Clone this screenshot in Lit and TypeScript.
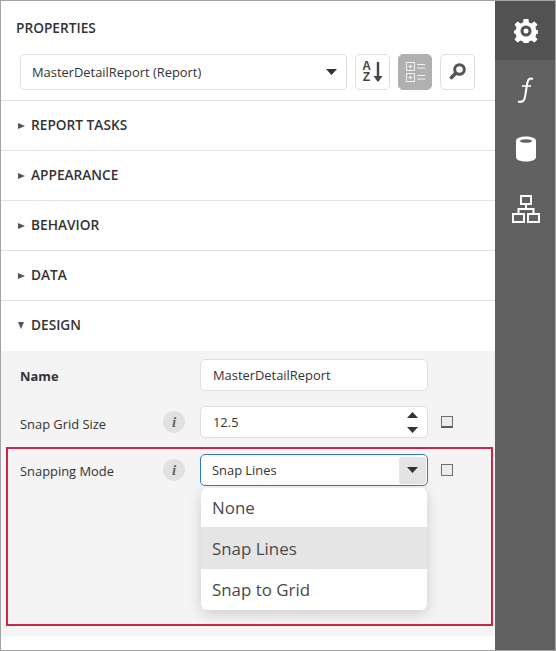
import { LitElement, html, css, svg } from "lit"
import { customElement } from "lit/decorators.js"

const SECTIONS = ["REPORT TASKS", "APPEARANCE", "BEHAVIOR", "DATA"]

const caret = svg`<svg width="11" height="6" viewBox="0 0 11 6"><path d="M0 0H11L5.5 6Z" fill="#333"/></svg>`

@customElement("app-root")
export class AppRoot extends LitElement {
  static styles = css`
    :host {
      display: block;
      width: 556px;
      height: 651px;
      box-sizing: border-box;
      border: 1px solid #a3a3a3;
      font-family: "Open Sans", "Noto Sans", sans-serif;
      color: #333;
      background: #fff;
      overflow: hidden;
    }
    * {
      box-sizing: border-box;
    }
    .frame {
      display: flex;
      height: 649px;
    }
    .panel {
      flex: 0 0 494px;
      display: flex;
      flex-direction: column;
    }
    .title {
      font-size: 13.7px;
      font-weight: 600;
      line-height: 16px;
      padding: 19px 0 0 15px;
      height: 43px;
    }
    .toolbar {
      display: flex;
      align-items: center;
      padding-left: 19px;
      height: 56px;
    }
    .box {
      border: 1px solid #dedede;
      border-radius: 5px;
      background: #fff;
    }
    .report {
      width: 327px;
      height: 36px;
      display: flex;
      align-items: center;
      justify-content: space-between;
      padding: 0 9px 0 11px;
      font-size: 12.9px;
    }
    .tool {
      width: 35px;
      height: 36px;
      margin-left: 8px;
      display: flex;
      align-items: center;
      justify-content: center;
    }
    .tool.on {
      width: 34px;
      background: #b0b0b0;
      border-color: #b0b0b0;
    }
    .az {
      width: 9px;
      margin-right: 2px;
      text-align: center;
      font: 700 12px/11px "Liberation Sans", sans-serif;
      color: #444;
    }
    .section {
      height: 50px;
      border-top: 1px solid #e3e3e3;
      display: flex;
      align-items: center;
      gap: 6px;
      padding: 0 0 2px 17px;
      font-size: 13.7px;
      font-weight: 600;
    }
    .section.last {
      height: 51px;
      gap: 7px;
      padding-bottom: 3px;
    }
    .arrow {
      width: 0;
      height: 0;
      margin-top: 2px;
      border-style: solid;
      border-width: 3.5px 0 3.5px 7px;
      border-color: transparent transparent transparent #555;
    }
    .arrow.open {
      border-width: 7px 3.5px 0 3.5px;
      border-color: #555 transparent transparent transparent;
    }
    .content {
      position: relative;
      height: 285px;
      background: #f4f4f4;
      padding-top: 8px;
    }
    .row {
      display: grid;
      grid-template-columns: 143px 37px 228px 19px;
      align-items: center;
      padding-left: 19px;
      font-size: 12.9px;
      margin-bottom: 15px;
    }
    .row.grid {
      margin-bottom: 16px;
    }
    .label {
      padding-top: 2px;
    }
    .row.grid .label {
      padding-top: 4px;
    }
    .label.bold {
      font-weight: 700;
    }
    .info {
      width: 22px;
      height: 22px;
      border-radius: 50%;
      background: #e1e1e1;
      color: #666;
      font: italic 700 15px/22px "Liberation Serif", serif;
      text-align: center;
    }
    .input {
      height: 32px;
      display: flex;
      align-items: center;
      justify-content: space-between;
      padding-left: 12px;
      font-size: 12.9px;
    }
    .spin {
      display: flex;
      flex-direction: column;
      gap: 9px;
      padding-right: 9px;
    }
    .select {
      border-color: #337ab7;
      padding-left: 11px;
      padding-right: 1px;
    }
    .drop {
      width: 27px;
      height: 27px;
      background: #e4e4e4;
      border-radius: 3px;
      display: flex;
      align-items: center;
      justify-content: center;
    }
    .check {
      width: 12px;
      height: 12px;
      margin-left: 13px;
      border: 1px solid #6f6f6f;
      background: #ececec;
    }
    .row.grid .check {
      border-bottom: 2px solid #5c5c5c;
    }
    .menu {
      position: absolute;
      left: 200px;
      top: 137px;
      width: 226px;
      height: 122px;
      background: #fff;
      border-radius: 6px;
      overflow: hidden;
      box-shadow: 0 4px 14px rgba(0, 0, 0, 0.16);
      font-size: 16.9px;
      color: #4a4a4a;
    }
    .item {
      height: 39px;
      line-height: 39px;
      padding-left: 11px;
    }
    .item.sel {
      height: 42px;
      line-height: 44px;
      background: #e5e5e5;
    }
    .item.end {
      height: 41px;
      line-height: 41px;
    }
    .mark {
      position: absolute;
      left: 5px;
      top: 96px;
      width: 487px;
      height: 179px;
      border: 2px solid #c8264a;
      pointer-events: none;
    }
    .rail {
      flex: 0 0 60px;
      background: #616161;
      display: flex;
      flex-direction: column;
    }
    .tab {
      height: 59px;
      padding-left: 2px;
      display: flex;
      align-items: center;
      justify-content: center;
    }
    .tab.active {
      background: #525252;
    }
    .tab.tree {
      padding-top: 3px;
    }
  `

  render() {
    return html`
      <div class="frame">
        <div class="panel">
          <div class="title">PROPERTIES</div>
          <div class="toolbar">
            <div class="box report">
              <span>MasterDetailReport (Report)</span>
              ${caret}
            </div>
            <div class="box tool">
              <div class="az">A Z</div>
              <svg width="10" height="22" viewBox="0 0 10 22">
                <path d="M5 1V20" stroke="#444" stroke-width="2.4"/>
                <path d="M0.500 15H9.500L5 21Z" fill="#444"/>
              </svg>
            </div>
            <div class="box tool on">
              <svg width="19" height="20" viewBox="0 0 19 20" fill="none" stroke="#f2f2f2">
                <rect x=".5" y=".5" width="8" height="8"/>
                <rect x=".5" y="11.500" width="8" height="8"/>
                <path d="M2.500 4.500H6.500M4.500 2.500V6.500M2.500 15.500H6.500M4.500 13.500V17.500M11 2.500H19M11 6H19M11 13.500H19M11 17H19"/>
              </svg>
            </div>
            <div class="box tool">
              <svg width="20" height="20" viewBox="0 0 20 20">
                <circle cx="11.500" cy="7.500" r="4.800" fill="none" stroke="#555" stroke-width="3"/>
                <path d="M7.500 11.500L3.500 15.500" stroke="#555" stroke-width="3.600" stroke-linecap="round"/>
              </svg>
            </div>
          </div>
          ${SECTIONS.map(
            (s) => html`<div class="section"><span class="arrow"></span>${s}</div>`,
          )}
          <div class="section last"><span class="arrow open"></span>DESIGN</div>
          <div class="content">
            <div class="row">
              <span class="label bold">Name</span>
              <span></span>
              <div class="box input">MasterDetailReport</div>
            </div>
            <div class="row grid">
              <span class="label">Snap Grid Size</span>
              <span class="info">i</span>
              <div class="box input">
                12.5
                <div class="spin">
                  <svg width="11" height="6" viewBox="0 0 11 6"><path d="M0 6H11L5.500 0Z" fill="#333"/></svg>
                  <svg width="11" height="6" viewBox="0 0 11 6"><path d="M0 0H11L5.500 6Z" fill="#333"/></svg>
                </div>
              </div>
              <span class="check"></span>
            </div>
            <div class="row">
              <span class="label">Snapping Mode</span>
              <span class="info">i</span>
              <div class="box input select">
                Snap Lines
                <div class="drop">${caret}</div>
              </div>
              <span class="check"></span>
            </div>
            <div class="menu">
              <div class="item">None</div>
              <div class="item sel">Snap Lines</div>
              <div class="item end">Snap to Grid</div>
            </div>
            <div class="mark"></div>
          </div>
        </div>
        <div class="rail">
          <div class="tab active">
            <svg width="26" height="26" viewBox="0 0 26 26">
              <path fill="#fff" fill-rule="evenodd" d="M10.600 1H15.400L16 4.600L18.400 5.600L21.400 3.500L24.500 6.600L22.400 9.600L23.400 12L25 12.600V15.400L23.400 16L22.400 18.400L24.500 21.400L21.400 24.500L18.400 22.400L16 23.400L15.400 25H10.600L10 23.400L7.600 22.400L4.600 24.500L1.500 21.400L3.600 18.400L2.600 16L1 15.400V12.600L2.600 12L3.600 9.600L1.500 6.600L4.600 3.500L7.600 5.600L10 4.600ZM13 7.500A5.500 5.500 0 1 0 13 18.500A5.500 5.500 0 1 0 13 7.500ZM13 10.500A2.500 2.500 0 1 1 13 15.500A2.500 2.500 0 1 1 13 10.500Z"/>
            </svg>
          </div>
          <div class="tab">
            <svg width="20" height="28" viewBox="0 0 20 28" fill="none" stroke="#fff" stroke-width="2">
              <path d="M17 3C13.500 1.500 12 3.500 11.300 7L9 21C8.300 25 6.500 26.500 2 25.500"/>
              <path d="M6 10H15" stroke-width="1.600"/>
            </svg>
          </div>
          <div class="tab">
            <svg width="20" height="26" viewBox="0 0 20 26">
              <path fill="#fff" fill-rule="evenodd" d="M0 5C0 2 4.500 0.500 10 0.500S20 2 20 5V21C20 24 15.500 25.500 10 25.500S0 24 0 21ZM10 3.200C6.500 3.200 4 4 4 5S6.500 6.800 10 6.800S16 6 16 5S13.500 3.200 10 3.200Z"/>
            </svg>
          </div>
          <div class="tab tree">
            <svg width="28" height="28" viewBox="0 0 28 28" fill="none" stroke="#fff" stroke-width="2">
              <rect x="9" y="1" width="10" height="8"/>
              <rect x="1" y="19" width="11" height="8"/>
              <rect x="16" y="19" width="11" height="8"/>
              <path d="M14 9V14M6.500 19V14H21.500V19"/>
            </svg>
          </div>
        </div>
      </div>
    `
  }
}
